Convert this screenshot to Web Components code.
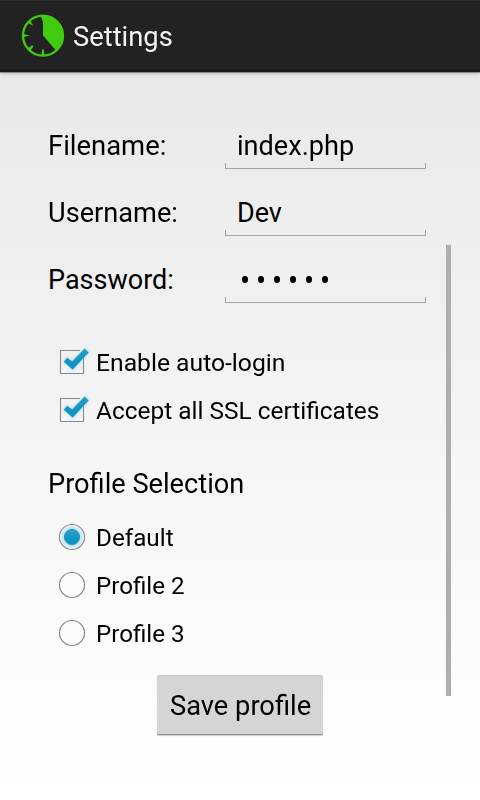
<!DOCTYPE html>
<html lang="en"><head><meta charset="utf-8"><title>Settings</title>
<style>
html,body{margin:0;height:100%}
body{font-family:Roboto,"Liberation Sans",sans-serif;color:#000;overflow:hidden}
</style></head><body>
<settings-screen></settings-screen>
<script>
function define(name, html){
  customElements.define(name, class extends HTMLElement{
    constructor(){
      super();
      const t=document.createElement('template');
      t.innerHTML=html;
      this.attachShadow({mode:'open'}).appendChild(t.content.cloneNode(true));
    }
  });
}
define('fit-text',`<style>:host{display:inline-block;white-space:nowrap;transform-origin:0 50%;transform:scaleX(var(--sx,1))}</style><slot></slot>`);
define('action-bar',`<style>
:host{display:flex;align-items:center;box-sizing:border-box;height:72px;padding-left:21px;background:linear-gradient(#2e2e2e 0 1px,#222 1px 69px,#1b1b1b 69px 72px);color:#f3f3f3;font-size:27px;line-height:32px;box-shadow:0 1px 1px #0005,0 2px 4px #0002;position:relative}
svg{width:44px;height:44px;margin-right:8px;flex:none}
slot{display:block;padding-top:2px}
</style><svg viewBox="0 0 44 44"><circle cx="22" cy="21.6" r="20" fill="none" stroke="#40cb0c" stroke-width="2.3"/>
<path d="M22 1.6A20 20 0 0 1 35.2 36.8L22 21.6Z" fill="#40cb0c"/>
<path d="M19.6 2h2.6v6.5zM2 20l6.8 1.6L2 23.2zM20.6 41.5l.6-6h1.6l.6 6zM6.4 8.4l6 3.5-3.6-6zM6.2 34.8l5-3.6 1.2 1.2-3.6 5z" fill="#40cb0c"/></svg><slot></slot>`);
define('form-row',`<style>
:host{display:flex;align-items:flex-start;height:67px;font-size:27px;line-height:32px}
.l{width:177px;flex:none}
</style><div class="l"><slot name="label"></slot></div><slot></slot>`);
define('text-field',`<style>
:host{display:block;box-sizing:border-box;width:201px;height:39px;padding-left:12px;
background:linear-gradient(#a3a3a3,#a3a3a3) 0 100%/100% 1px no-repeat,linear-gradient(#a3a3a3,#a3a3a3) 0 100%/1px 6px no-repeat,linear-gradient(#a3a3a3,#a3a3a3) 100% 100%/1px 6px no-repeat}
</style><slot></slot>`);
define('password-dots',`<style>:host{display:flex;gap:9.8px;padding:12px 0 0 5px}i{width:6.2px;height:7px;border-radius:50%;background:#000}</style><i></i><i></i><i></i><i></i><i></i><i></i>`);
define('check-row',`<style>
:host{display:flex;align-items:center;height:48px;padding-left:8px;font-size:24px;line-height:28px}
svg{width:40px;height:40px;flex:none}
</style><svg viewBox="0 0 40 40"><defs><filter id="g" x="-40%" y="-40%" width="180%" height="180%"><feGaussianBlur stdDeviation="1.8"/></filter><linearGradient id="b" x2="0" y2="1"><stop stop-color="#2a9cc4"/><stop offset="1" stop-color="#078fc2"/></linearGradient></defs>
<path d="M24 7.5H4.5v23h23V15" fill="none" stroke="#888" stroke-width="1.1"/>
<path d="M8 18.7l3.2-3.7 4.8 3.5L28.8 5.8l3.8 3.6-15.9 17z" fill="#6fd0f2" stroke="#6fd0f2" stroke-width="1.5" opacity=".6" filter="url(#g)"/>
<path d="M7.8 18.7l3.3-3.9 5 3.6L28.7 5.6l4 3.8-16 17z" fill="url(#b)"/></svg><slot></slot>`);
define('radio-row',`<style>
:host{display:flex;align-items:center;height:48px;padding-left:8px;font-size:24px;line-height:28px}
svg{width:40px;height:40px;flex:none}
.on{display:none}:host([checked]) .on{display:inline}
</style><svg viewBox="0 0 40 40"><defs><radialGradient id="g"><stop offset=".6" stop-color="#a8dff2"/><stop offset="1" stop-color="#e3f4fb"/></radialGradient><linearGradient id="b" x2="0" y2="1"><stop stop-color="#23a3d0"/><stop offset="1" stop-color="#078fc0"/></linearGradient></defs>
<circle cx="16" cy="19" r="12.5" fill="#fcfcfc" stroke="#858585" stroke-width="1.15"/>
<g class="on"><circle cx="16" cy="19" r="11.8" fill="url(#g)"/><circle cx="16" cy="19" r="7.6" fill="url(#b)" stroke="#3388a5" stroke-width=".9"/></g></svg><slot></slot>`);
define('push-button',`<style>
:host{display:block;box-sizing:border-box;width:166px;height:60px;padding:14px 0 0 13px;background:#d5d5d5;border-radius:2px;border-top:1px solid #ccc;border-bottom:1px solid #8d8d8d;box-shadow:0 1px 1px #0003;font-size:27px;line-height:32px}
</style><slot></slot>`);
define('settings-screen',`<style>
:host{display:flex;flex-direction:column;height:800px;width:480px;background:linear-gradient(#e9e9e9 72px,#fdfdfd 700px,#fff)}
main{display:flex;flex:1}
form{width:398px;padding:58px 0 0 48px;flex:none}
.checks{margin-top:8px}
h2{font:400 27px/32px Roboto,sans-serif;margin:33px 0 0}
.radios{margin-top:14px}
push-button{margin:17px 0 0 109px}
aside{width:5px;height:451px;margin-top:173px;background:#b0b0b0;box-shadow:inset 0 0 0 1px #aaa}
</style>
<action-bar><fit-text style="--sx:1.012">Settings</fit-text></action-bar>
<main><form>
<form-row><fit-text slot="label" style="--sx:1.016">Filename:</fit-text><text-field><fit-text style="--sx:1.004">index.php</fit-text></text-field></form-row>
<form-row><fit-text slot="label" style="--sx:1.007">Username:</fit-text><text-field><fit-text>Dev</fit-text></text-field></form-row>
<form-row><fit-text slot="label">Password:</fit-text><text-field><password-dots></password-dots></text-field></form-row>
<div class="checks"><check-row><fit-text style="--sx:1.028">Enable auto-login</fit-text></check-row>
<check-row><fit-text style="--sx:1.018">Accept all SSL certificates</fit-text></check-row></div>
<h2><fit-text style="--sx:1.007">Profile Selection</fit-text></h2>
<div class="radios"><radio-row checked><fit-text style="--sx:1.01">Default</fit-text></radio-row>
<radio-row><fit-text style="--sx:1.006">Profile 2</fit-text></radio-row>
<radio-row><fit-text style="--sx:1.006">Profile 3</fit-text></radio-row></div>
<push-button><fit-text style="--sx:1.01">Save profile</fit-text></push-button>
</form><aside></aside></main>`);
</script></body></html>
